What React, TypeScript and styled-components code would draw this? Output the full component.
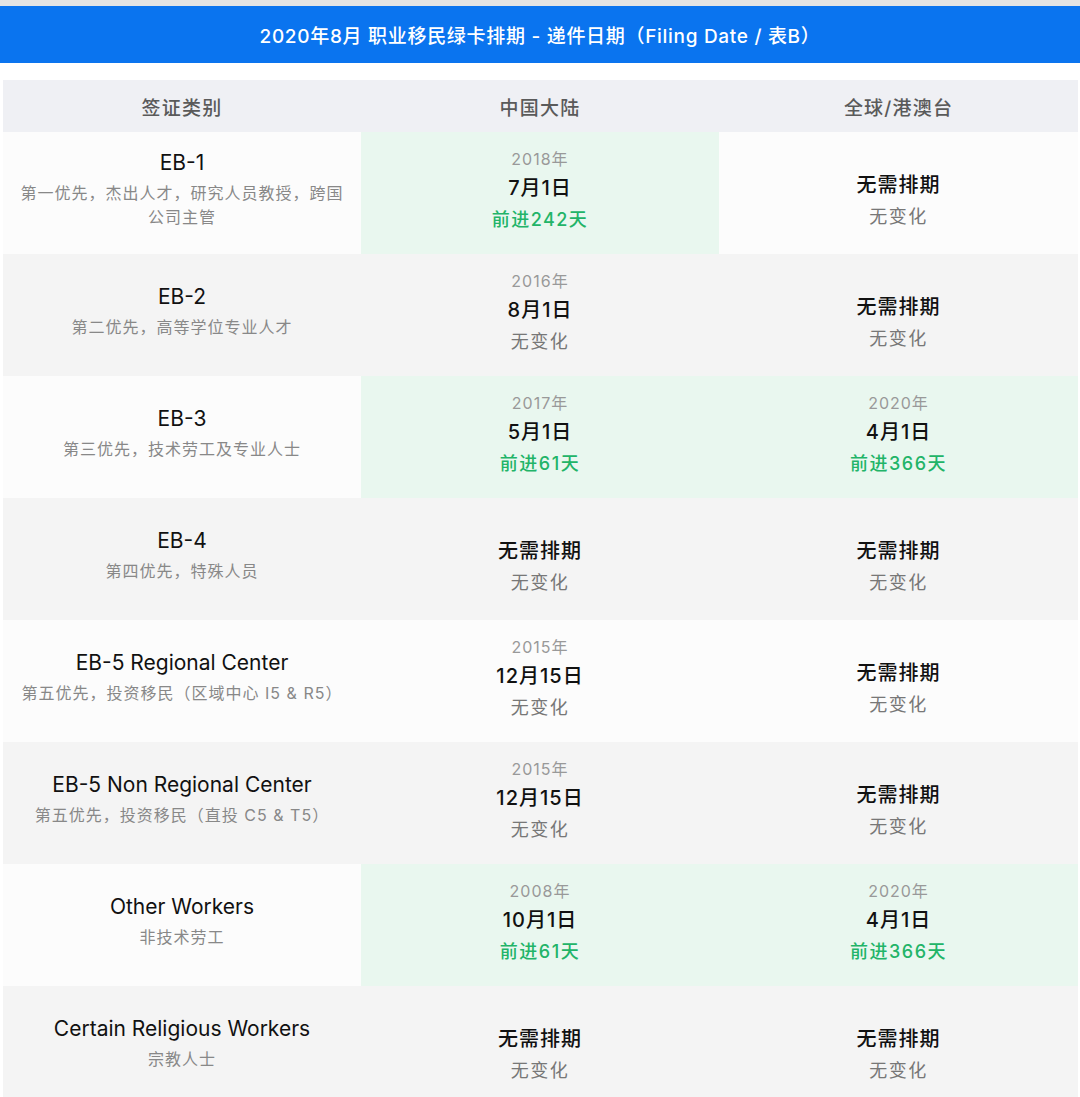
import React from 'react';
import styled, { createGlobalStyle } from 'styled-components';

type Change = { text: string; up?: boolean };
type Cell = { year?: string; date: string; change: Change; hi?: boolean };
type Row = { title: string; sub: string; cn: Cell; world: Cell };

const none: Cell = { date: '无需排期', change: { text: '无变化' } };
const same = { text: '无变化' };

const rows: Row[] = [
    {
        title: 'EB-1',
        sub: '第一优先，杰出人才，研究人员教授，跨国公司主管',
        cn: { year: '2018年', date: '7月1日', change: { text: '前进242天', up: true }, hi: true },
        world: none,
    },
    {
        title: 'EB-2',
        sub: '第二优先，高等学位专业人才',
        cn: { year: '2016年', date: '8月1日', change: same },
        world: none,
    },
    {
        title: 'EB-3',
        sub: '第三优先，技术劳工及专业人士',
        cn: { year: '2017年', date: '5月1日', change: { text: '前进61天', up: true }, hi: true },
        world: { year: '2020年', date: '4月1日', change: { text: '前进366天', up: true }, hi: true },
    },
    {
        title: 'EB-4',
        sub: '第四优先，特殊人员',
        cn: none,
        world: none,
    },
    {
        title: 'EB-5 Regional Center',
        sub: '第五优先，投资移民（区域中心 I5 & R5）',
        cn: { year: '2015年', date: '12月15日', change: same },
        world: none,
    },
    {
        title: 'EB-5 Non Regional Center',
        sub: '第五优先，投资移民（直投 C5 & T5）',
        cn: { year: '2015年', date: '12月15日', change: same },
        world: none,
    },
    {
        title: 'Other Workers',
        sub: '非技术劳工',
        cn: { year: '2008年', date: '10月1日', change: { text: '前进61天', up: true }, hi: true },
        world: { year: '2020年', date: '4月1日', change: { text: '前进366天', up: true }, hi: true },
    },
    {
        title: 'Certain Religious Workers',
        sub: '宗教人士',
        cn: none,
        world: none,
    },
];

const GlobalStyle = createGlobalStyle`
    body {
        margin: 0;
        background: #fff;
        font-family: Inter, "Noto Sans CJK SC", sans-serif;
    }
`;

const Page = styled.div`
    width: 1080px;
    border-top: 6px solid #e4e4e4;
`;

const TitleBar = styled.div`
    height: 57px;
    background: #0a74ef;
    color: #fff;
    display: flex;
    align-items: center;
    justify-content: center;
    font-size: 19px;
    font-weight: 500;
    letter-spacing: 0.7px;
`;

const Table = styled.div`
    margin: 17px 2px 0 3px;
`;

const Grid = styled.div<{ $even?: boolean }>`
    display: grid;
    grid-template-columns: 358px 358px 1fr;
    background: ${p => (p.$even ? '#f4f4f4' : '#fcfcfc')};
`;

const HeadRow = styled(Grid)`
    height: 52px;
    background: #eff0f4;
`;

const HeadCell = styled.div`
    display: flex;
    align-items: center;
    justify-content: center;
    font-size: 19px;
    letter-spacing: 1.2px;
    color: #5a5a5a;
    font-weight: 500;
`;

const Cell = styled.div<{ $hi?: boolean; $shift?: number }>`
    height: 122px;
    display: flex;
    flex-direction: column;
    align-items: center;
    justify-content: center;
    text-align: center;
    padding: 0 15px;
    box-sizing: border-box;
    background: ${p => (p.$hi ? '#e9f7ef' : 'transparent')};
    ${p => (p.$shift && p.$shift > 0 ? `padding-top: ${p.$shift}px;` : '')}
    ${p => (p.$shift && p.$shift < 0 ? `padding-bottom: ${-p.$shift}px;` : '')}
`;

const Title = styled.div`
    font-size: 21px;
    color: #111;
    line-height: 30px;
`;

const Sub = styled.div`
    font-size: 16px;
    letter-spacing: 1px;
    color: #888;
    line-height: 24px;
    margin-top: 3px;
`;

const Year = styled.div`
    font-size: 16px;
    letter-spacing: 1px;
    color: #999;
    line-height: 27px;
`;

const DateText = styled.div`
    font-size: 20px;
    letter-spacing: 1px;
    color: #111;
    font-weight: 500;
    line-height: 30px;
`;

const ChangeText = styled.div<{ $up?: boolean }>`
    font-size: 18px;
    letter-spacing: 1.5px;
    line-height: 33px;
    color: ${p => (p.$up ? '#22b468' : '#777')};
    font-weight: ${p => (p.$up ? 500 : 400)};
`;

const DateCell = ({ cell }: { cell: Cell }) => (
    <Cell $hi={cell.hi} $shift={cell.year ? -4 : 16}>
        {cell.year && <Year>{cell.year}</Year>}
        <DateText>{cell.date}</DateText>
        <ChangeText $up={cell.change.up}>{cell.change.text}</ChangeText>
    </Cell>
);

const App = () => {
    return (
        <Page>
            <GlobalStyle />
            <TitleBar>2020年8月 职业移民绿卡排期 - 递件日期（Filing Date / 表B）</TitleBar>
            <Table>
                <HeadRow>
                    <HeadCell>签证类别</HeadCell>
                    <HeadCell>中国大陆</HeadCell>
                    <HeadCell>全球/港澳台</HeadCell>
                </HeadRow>
                {rows.map((row, i) => (
                    <Grid key={row.title} $even={i % 2 === 1}>
                        <Cell $shift={-9}>
                            <Title>{row.title}</Title>
                            <Sub>{row.sub}</Sub>
                        </Cell>
                        <DateCell cell={row.cn} />
                        <DateCell cell={row.world} />
                    </Grid>
                ))}
            </Table>
        </Page>
    );
};

export default App;
